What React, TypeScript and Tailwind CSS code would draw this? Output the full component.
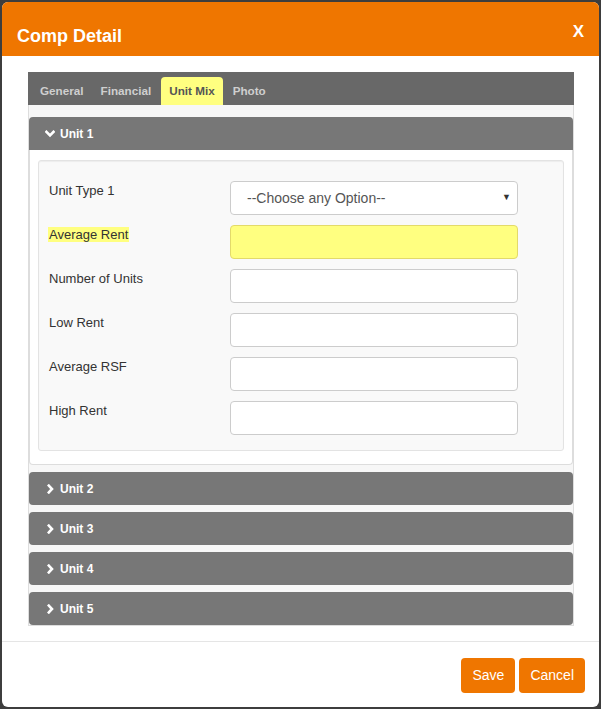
import React from 'react';

const FIELDS = ['Number of Units', 'Low Rent', 'Average RSF', 'High Rent'];
const TABS = ['General', 'Financial', 'Unit Mix', 'Photo'];

function Chevron({ open }: { open?: boolean }) {
  return open ? (
    <svg width="10" height="8" viewBox="0 0 10 8" className="mr-[5px]">
      <polyline points="1.5,1.8 5,5.3 8.5,1.8" fill="none" stroke="white" strokeWidth="2.6" strokeLinecap="square" />
    </svg>
  ) : (
    <svg width="7" height="10" viewBox="0 0 7 10" className="mr-[6px] ml-[2px]">
      <polyline points="1.8,1.6 5,5 1.8,8.4" fill="none" stroke="white" strokeWidth="2.6" strokeLinecap="square" />
    </svg>
  );
}

function UnitHeader({ n, open }: { n: number; open?: boolean }) {
  return (
    <div
      className={`h-[33px] bg-[#777] flex items-center pl-[16px] text-white font-bold text-[12px] ${
        open ? 'rounded-t-[4px]' : 'rounded-[4px]'
      }`}
    >
      <Chevron open={open} />
      <span>Unit {n}</span>
    </div>
  );
}

export default function App() {
  return (
    <div
      className="w-[601px] h-[709px] bg-[#3d3d3d] pt-[2px] pl-[2px] overflow-hidden"
      style={{ fontFamily: '"Liberation Sans", Arial, sans-serif' }}
    >
      <div className="w-[597px] h-[705px] bg-white rounded-[6px] overflow-hidden flex flex-col">
        {/* header */}
        <div className="h-[54px] bg-[#ef7600] flex justify-between px-[15px] shrink-0">
          <div className="pt-[24px] text-white font-bold text-[18px] leading-[21px]">Comp Detail</div>
          <div className="pt-[20px] text-white font-bold text-[17px] leading-[20px]">X</div>
        </div>

        {/* body */}
        <div className="pt-[16px] pl-[26px] pr-[25px]">
          <div className="h-[33px] bg-[#686868] flex items-end pl-[5px] gap-[3px]">
            {TABS.map((t) => (
              <div
                key={t}
                className={`h-[28px] flex items-center text-[11.7px] font-bold ${
                  t === 'Unit Mix' ? 'bg-[#ffff80] text-[#555] rounded-t-[4px] px-[8px]' : 'px-[7px] text-[#cfcfcf]'
                }`}
              >
                {t}
              </div>
            ))}
          </div>

          <div className="border border-t-0 border-[#ddd] bg-[#f7f7f7] pt-[12px] flex flex-col gap-[7px]">
            {/* unit 1 open */}
            <div>
              <UnitHeader n={1} open />
              <div className="bg-white border border-t-0 border-[#ddd] rounded-b-[4px] pt-[10px] pb-[13px] px-[8px]">
                <div className="bg-[#f9f9f9] border border-[#e3e3e3] rounded-[3px] shadow-[inset_0_1px_1px_rgba(0,0,0,0.05)] pt-[20px] pb-[15px] pl-[10px] pr-[45px] flex flex-col gap-[10px] text-[13px] text-[#333]">
                  <div className="flex">
                    <div className="w-[181px]">Unit Type 1</div>
                    <div className="flex-1 h-[34px] bg-white border border-[#ccc] rounded-[4px] flex items-center justify-between pl-[16px] pr-[6px] text-[14px] text-[#555]">
                      <span>--Choose any Option--</span>
                      <span className="text-[9px] text-[#333]">▼</span>
                    </div>
                  </div>
                  <div className="flex">
                    <div className="w-[181px]">
                      <span className="bg-[#ffff80] pl-[1px] pr-[1px] -ml-[1px]">Average Rent</span>
                    </div>
                    <div className="flex-1 h-[34px] bg-[#ffff80] border border-[#e3da6a] rounded-[4px]" />
                  </div>
                  {FIELDS.map((f) => (
                    <div key={f} className="flex">
                      <div className="w-[181px]">{f}</div>
                      <div className="flex-1 h-[34px] bg-white border border-[#ccc] rounded-[4px]" />
                    </div>
                  ))}
                </div>
              </div>
            </div>
            {[2, 3, 4, 5].map((n) => (
              <UnitHeader key={n} n={n} />
            ))}
          </div>
        </div>

        {/* footer */}
        <div className="mt-[15px] border-t border-[#e5e5e5] pt-[16px] pr-[14px] flex justify-end gap-[4px]">
          <button className="h-[35px] px-[11px] bg-[#ef7600] text-white text-[14px] rounded-[4px]">Save</button>
          <button className="h-[35px] px-[11px] bg-[#ef7600] text-white text-[14px] rounded-[4px]">Cancel</button>
        </div>
      </div>
    </div>
  );
}
